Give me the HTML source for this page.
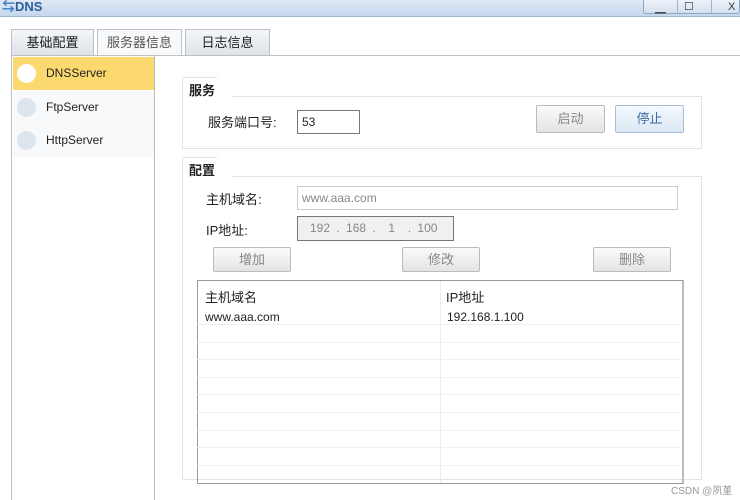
<!DOCTYPE html>
<html><head><meta charset="utf-8"><style>
*{box-sizing:border-box;margin:0;padding:0}
html{width:740px;height:500px;overflow:hidden}
body{width:740px;height:500px;background:#fff;font-family:"Liberation Sans","Noto Sans CJK SC",sans-serif;font-size:12px;color:#222;position:relative;overflow:hidden}
.a{position:absolute}
.title{left:0;top:0;width:740px;height:17px;background:linear-gradient(#dfe9f5,#c4d7ec);border-bottom:1px solid #9fb5d0}
.btn{position:absolute;border:1px solid #bbb;border-radius:2px;background:linear-gradient(#fafafa,#e4e4e4);color:#888;text-align:center;font-size:13px}
.tab{position:absolute;top:29px;height:27px;border:1px solid #b8c2cc;border-bottom:none;background:linear-gradient(#f4f6f8,#dde3e8);text-align:center;line-height:26px;font-size:13px}
.box{position:absolute;border:1px solid #e3e3e3}
.leg{position:absolute;background:#fff;font-weight:bold;font-size:13px;border:1px solid #e3e3e3;border-bottom:none;border-right:none;padding:2px 6px}
.item{position:absolute;left:13px;width:141px;height:33px;line-height:33px;padding-left:33px;font-size:12px}
.dot{position:absolute;left:4px;top:7px;width:19px;height:19px;border-radius:50%;background:#dde5ef}
.hl{position:absolute;left:197px;width:484px;height:1px;background:#f0f0f0}
</style></head><body>
<div class="a title"></div>
<div class="a" style="left:2px;top:0;font-weight:bold;color:#2d5e9a;font-size:13px;line-height:14px"><span style="color:#3a7bc8">⇆</span>DNS</div>
<div class="a" style="left:643px;top:-1px;width:97px;height:15px;border:1px solid #8fa6c2;border-radius:0 0 3px 3px;background:linear-gradient(#eef3f9,#d3e0ee);font-size:11px;line-height:12px;color:#333">
<span class="a" style="left:11px;top:3px">▁</span><span class="a" style="left:40px;top:1px">☐</span><span class="a" style="left:84px;top:1px">X</span>
<div class="a" style="left:33px;top:0;width:1px;height:14px;background:#9fb5d0"></div><div class="a" style="left:67px;top:0;width:1px;height:14px;background:#9fb5d0"></div></div>
<div class="tab" style="left:11px;width:83px;color:#222">基础配置</div>
<div class="tab" style="left:97px;width:85px;background:#f8f9fa;color:#555">服务器信息</div>
<div class="tab" style="left:185px;width:85px;color:#222">日志信息</div>
<div class="a" style="left:11px;top:55px;width:735px;height:460px;border:1px solid #c0c0c0"></div>
<div class="a" style="left:12px;top:56px;width:143px;height:444px;border-right:1px solid #bbb"></div>
<div class="item" style="top:57px;background:#fcd96e"><div class="dot" style="background:#fff"></div>DNSServer</div>
<div class="item" style="top:91px;background:#f8f9fa"><div class="dot"></div>FtpServer</div>
<div class="item" style="top:124px;background:#f8f9fa"><div class="dot"></div>HttpServer</div>

<div class="box" style="left:182px;top:96px;width:520px;height:53px"></div>
<div class="leg" style="left:182px;top:77px;width:50px;height:20px;clip-path:polygon(0 0,70% 0,100% 100%,0 100%)">服务</div>
<div class="a" style="left:208px;top:112px;font-size:13px">服务端口号:</div>
<div class="a" style="left:297px;top:110px;width:63px;height:24px;border:1px solid #777;padding:4px;font-size:12px">53</div>
<div class="btn" style="left:536px;top:105px;width:69px;height:28px;line-height:26px">启动</div>
<div class="btn" style="left:615px;top:105px;width:69px;height:28px;line-height:26px;background:linear-gradient(#f5f9fd,#dbe7f3);color:#3b6ea8;border-color:#aabfd6">停止</div>

<div class="box" style="left:182px;top:176px;width:520px;height:304px"></div>
<div class="leg" style="left:182px;top:157px;width:50px;height:20px;clip-path:polygon(0 0,70% 0,100% 100%,0 100%)">配置</div>
<div class="a" style="left:206px;top:189px;font-size:13px">主机域名:</div>
<div class="a" style="left:297px;top:186px;width:381px;height:24px;border:1px solid #ccc;padding:4px;color:#888;font-size:12px">www.aaa.com</div>
<div class="a" style="left:206px;top:220px;font-size:13px">IP地址:</div>
<div class="a" style="left:297px;top:216px;width:157px;height:25px;border:1px solid #777;background:#f0f0f0;color:#888;padding:4px 12px;font-size:12px;word-spacing:3px">192 . 168 . &nbsp;1 &nbsp;. 100</div>
<div class="btn" style="left:213px;top:247px;width:78px;height:25px;line-height:23px">增加</div>
<div class="btn" style="left:402px;top:247px;width:78px;height:25px;line-height:23px">修改</div>
<div class="btn" style="left:593px;top:247px;width:78px;height:25px;line-height:23px">删除</div>

<div class="a" style="left:197px;top:280px;width:487px;height:204px;border:1px solid #999;border-right:2px solid #bbb"></div>
<div class="a" style="left:440px;top:281px;width:1px;height:202px;background:#eee"></div>
<div class="a" style="left:205px;top:287px;font-size:13px">主机域名</div>
<div class="a" style="left:446px;top:287px;font-size:13px">IP地址</div>
<div class="a" style="left:205px;top:310px;font-size:12px">www.aaa.com</div>
<div class="a" style="left:447px;top:310px;font-size:12px">192.168.1.100</div>
<div class="hl" style="top:324px"></div><div class="hl" style="top:342px"></div><div class="hl" style="top:359px"></div><div class="hl" style="top:377px"></div><div class="hl" style="top:394px"></div><div class="hl" style="top:412px"></div><div class="hl" style="top:430px"></div><div class="hl" style="top:447px"></div><div class="hl" style="top:465px"></div>
<div class="a" style="left:671px;top:482px;font-size:10px;color:#999">CSDN @夙堇</div>
</body></html>
